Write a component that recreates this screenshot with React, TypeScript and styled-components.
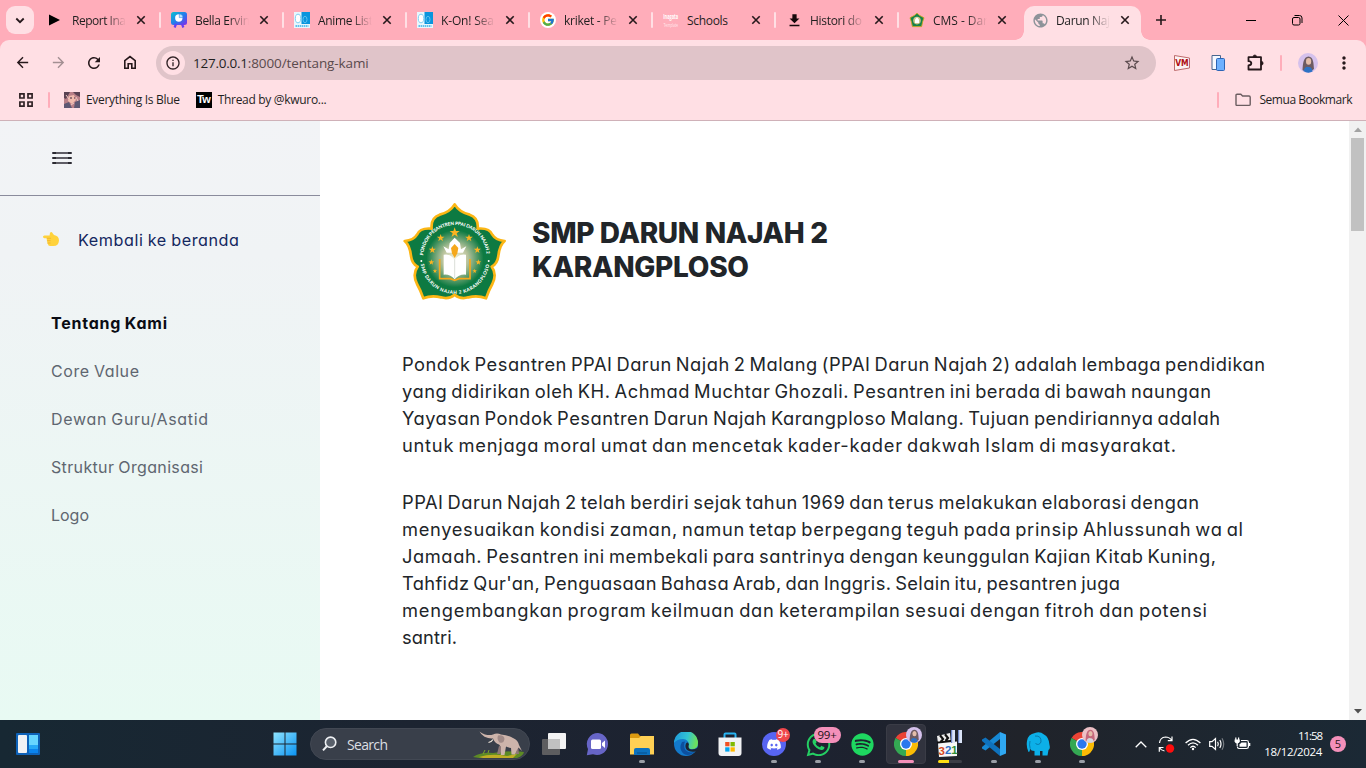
import React, { useLayoutEffect, useRef, useState } from "react";
import styled, { createGlobalStyle, css } from "styled-components";
import {
  MdArrowBack,
  MdArrowForward,
  MdRefresh,
  MdStarBorder,
  MdMoreVert,
  MdInfoOutline,
  MdFileDownload,
  MdPublic,
} from "react-icons/md";
import { FcGoogle } from "react-icons/fc";
import { FaWhatsapp, FaSpotify, FaDiscord } from "react-icons/fa";

const uiFont = `"Open Sans", "Noto Sans", sans-serif`;
const pageFont = `Inter, "Open Sans", sans-serif`;

const GlobalStyle = createGlobalStyle`
  * { box-sizing: border-box; }
  html, body { margin: 0; padding: 0; overflow: hidden; }
  body { font-family: ${uiFont}; font-size: 12px; color: #1f1f1f; }
  svg { display: block; flex: none; }
  p, h1 { margin: 0; }
`;

/* Text tracked so that it spans a given width */
const FitText = styled.span`
  display: block;
  white-space: pre;
  width: max-content;
`;

function Fit({ w, children }: { w: number; children: string }) {
  const ref = useRef<HTMLSpanElement>(null);
  const [spacing, setSpacing] = useState(0);
  useLayoutEffect(() => {
    const el = ref.current;
    if (!el) return;
    el.style.letterSpacing = "0px";
    const natural = el.getBoundingClientRect().width;
    setSpacing((w - natural) / (children.length - 1));
  }, [w, children]);
  return (
    <FitText ref={ref} style={{ letterSpacing: `${spacing}px` }}>
      {children}
    </FitText>
  );
}

const Screen = styled.div`
  width: 1366px;
  height: 768px;
  display: flex;
  flex-direction: column;
  overflow: hidden;
  background: #fff;
`;

/* ---------- Browser tab strip ---------- */
const TabStrip = styled.div`
  height: 40px;
  flex: none;
  display: flex;
  align-items: flex-start;
  background: #ffadba;
`;
const TabSearch = styled.div`
  width: 28px;
  height: 28px;
  margin: 6px 6px 0;
  border-radius: 9px;
  background: #ffdfe4;
  display: grid;
  place-items: center;
`;
const Tabs = styled.div`
  display: flex;
  gap: 6px;
`;
const flare = css`
  content: "";
  position: absolute;
  bottom: 0;
  width: 9px;
  height: 9px;
`;
const TabBox = styled.div<{ $active?: boolean; $divided?: boolean }>`
  position: relative;
  width: 117px;
  height: 34px;
  margin-top: 6px;
  padding: 0 10px 6px 8px;
  display: flex;
  align-items: center;
  border-radius: 10px 10px 0 0;
  ${(p) =>
    p.$divided &&
    css`
      &::after {
        content: "";
        position: absolute;
        right: -4px;
        top: 6px;
        width: 2px;
        height: 16px;
        border-radius: 1px;
        background: #ffdfe4;
      }
    `}
  ${(p) =>
    p.$active &&
    css`
      background: #ffdfe4;
      &::before {
        ${flare}
        left: -9px;
        background: radial-gradient(circle at 0 0, transparent 8.5px, #ffdfe4 9px);
      }
      &::after {
        ${flare}
        right: -9px;
        background: radial-gradient(circle at 100% 0, transparent 8.5px, #ffdfe4 9px);
      }
    `}
`;
const Favicon = styled.div`
  width: 16px;
  height: 16px;
  margin-right: 8px;
  display: grid;
  place-items: center;
`;
const TabTitle = styled.div<{ $fade: boolean }>`
  width: 56px;
  overflow: hidden;
  line-height: 18px;
  margin-top: 1px;
  margin-right: 8px;
  ${(p) =>
    p.$fade && css`mask-image: linear-gradient(90deg, #000 34px, transparent 54px);`}
`;
const NewTab = styled.div`
  width: 20px;
  height: 20px;
  margin: 10px 0 0 10px;
  display: grid;
  place-items: center;
`;
const WindowButtons = styled.div`
  margin-left: auto;
  height: 40px;
  display: flex;
`;
const WindowButton = styled.div`
  width: 46px;
  height: 40px;
  display: grid;
  place-items: center;
`;

/* ---------- Toolbar ---------- */
const ToolbarBack = styled.div`
  background: #ffadba;
  flex: none;
`;
const Toolbar = styled.div`
  height: 45px;
  padding: 0 12px;
  display: flex;
  align-items: center;
  background: #ffdfe4;
  border-radius: 9px 9px 0 0;
`;
const NavButton = styled.div<{ $dim?: boolean }>`
  width: 20px;
  height: 20px;
  margin-right: 16px;
  display: grid;
  place-items: center;
  color: ${(p) => (p.$dim ? "#a38f92" : "#26181b")};
`;
const AddressBar = styled.div`
  width: 1000px;
  height: 34px;
  padding: 0 15px 0 5px;
  border-radius: 17px;
  background: #e0c4c9;
  display: flex;
  align-items: center;
  color: #5a4a4d;
`;
const InfoChip = styled.div`
  width: 24px;
  height: 24px;
  margin-right: 8px;
  border-radius: 50%;
  background: #ffdfe4;
  display: grid;
  place-items: center;
  color: #302225;
`;
const Url = styled.div`
  display: flex;
  flex: 1;
  font-size: 13.5px;
  line-height: 20px;
`;
const Host = styled.span`
  color: #1f1f1f;
`;
const Extensions = styled.div`
  display: flex;
  align-items: center;
  padding-left: 16px;
`;
const ExtensionSlot = styled.div<{ $gap: number }>`
  width: 20px;
  height: 20px;
  margin-right: ${(p) => p.$gap}px;
  display: grid;
  place-items: center;
  color: #26181b;
`;
const PinkRule = styled.div<{ $mr: number; $ml?: number }>`
  width: 2px;
  height: 16px;
  border-radius: 1px;
  background: #ffadba;
  margin-right: ${(p) => p.$mr}px;
  margin-left: ${(p) => p.$ml ?? 0}px;
`;

/* ---------- Bookmarks bar ---------- */
const Bookmarks = styled.div`
  height: 36px;
  flex: none;
  display: flex;
  align-items: center;
  padding: 0 14px 6px 18px;
  background: #ffdfe4;
  border-bottom: 1px solid #cfb1b8;
`;
const Bookmark = styled.div<{ $gap?: number }>`
  display: flex;
  align-items: center;
  gap: ${(p) => p.$gap ?? 6}px;
  line-height: 18px;
  margin-right: 16px;
  &:last-child {
    margin-right: 0;
  }
`;
const Spacer = styled.div`
  flex: 1;
`;
const TwIcon = styled.div`
  width: 16px;
  height: 16px;
  background: #000;
  color: #fff;
  font: 700 11px/15px "Liberation Sans", sans-serif;
  letter-spacing: -0.5px;
  text-align: center;
`;

/* ---------- Web page ---------- */
const Viewport = styled.div`
  flex: 1;
  min-height: 0;
  display: flex;
  font-family: ${pageFont};
  font-feature-settings: "cv11";
`;
const Sidebar = styled.aside`
  width: 320px;
  flex: none;
  background: linear-gradient(180deg, #f2f3f6 0%, #f0f3f5 22%, #e8faf3 100%);
`;
const SidebarHead = styled.div`
  height: 75px;
  padding: 31px 0 0 52px;
  border-bottom: 1px solid #8a8b9c;
`;
const BackLink = styled.a`
  display: flex;
  align-items: center;
  padding: 31px 0 0 42px;
  height: 57px;
  gap: 18px;
  font-size: 16.2px;
  word-spacing: -0.8px;
  line-height: 24px;
  color: #14275f;
`;
const Menu = styled.nav`
  display: flex;
  flex-direction: column;
  gap: 24px;
  padding: 58px 0 0 51px;
`;
const MenuItem = styled.a<{ $active?: boolean }>`
  font-size: 16px;
  word-spacing: -0.8px;
  line-height: 24px;
  color: ${(p) => (p.$active ? "#0a0c14" : "#5f6670")};
  font-weight: ${(p) => (p.$active ? 700 : 400)};
`;
const Content = styled.main`
  flex: 1;
  padding: 80px 0 0 82px;
  color: #212529;
`;
const Brand = styled.header`
  display: flex;
  height: 102px;
  gap: 25px;
`;
const BrandName = styled.h1`
  padding-top: 15px;
  font-size: 28px;
  line-height: 34px;
  font-weight: 800;
`;
const Paragraph = styled.p<{ $top: number }>`
  margin-top: ${(p) => p.$top}px;
  font-size: 18.3px;
  word-spacing: -1.6px;
  line-height: 27px;
`;
const Scrollbar = styled.div`
  width: 17px;
  flex: none;
  background: #f1f1f1;
  display: flex;
  flex-direction: column;
  align-items: center;
`;
const ScrollArrow = styled.div<{ $down?: boolean }>`
  height: 17px;
  display: grid;
  place-items: center;
  margin-top: ${(p) => (p.$down ? "auto" : "0")};
`;
const ScrollThumb = styled.div`
  width: 13px;
  height: 93px;
  background: #c1c1c1;
`;

/* ---------- Taskbar ---------- */
const Taskbar = styled.div`
  height: 48px;
  flex: none;
  display: flex;
  align-items: center;
  background: linear-gradient(90deg, #172833 0%, #1c2431 30%, #1d2230 60%, #20232a 75%, #1b2935 100%);
  color: #fff;
`;
const Widgets = styled.div`
  padding-left: 16px;
  width: 263px;
`;
const TaskSlot = styled.div<{ $active?: boolean }>`
  position: relative;
  width: 44px;
  height: 48px;
  display: grid;
  place-items: center;
  ${(p) =>
    p.$active &&
    css`
      &::before {
        content: "";
        position: absolute;
        inset: 4px 2px;
        border-radius: 4px;
        background: #31333e;
        border: 1px solid #3a3c46;
      }
    `}
`;
const Glyph = styled.div`
  position: relative;
  display: grid;
  place-items: center;
`;
const Indicator = styled.div<{ $w: number; $c: string }>`
  position: absolute;
  bottom: 5px;
  left: ${(p) => (44 - p.$w) / 2}px;
  width: ${(p) => p.$w}px;
  height: 3px;
  border-radius: 2px;
  background: ${(p) => p.$c};
`;
const MediaProgress = styled.div`
  position: absolute;
  bottom: 5px;
  left: 10px;
  width: 24px;
  height: 3px;
  border-radius: 2px;
  background: linear-gradient(90deg, #ffdf12 11px, #3c3e46 11px);
`;
const SearchBox = styled.div`
  width: 220px;
  height: 32px;
  margin: 0 2px 0 3px;
  padding: 0 4px 0 11px;
  border-radius: 16px;
  background: #393f4a;
  border: 1px solid #424853;
  display: flex;
  align-items: center;
  gap: 10px;
  font-size: 14px;
  color: #dcdee2;
`;
const CountBadge = styled.div<{ $pink?: boolean }>`
  position: absolute;
  top: -4px;
  right: ${(p) => (p.$pink ? "-9px" : "-4px")};
  width: ${(p) => (p.$pink ? 27 : 14)}px;
  height: ${(p) => (p.$pink ? 16 : 14)}px;
  border-radius: 8px;
  background: ${(p) => (p.$pink ? "#f490ba" : "#f0474c")};
  color: ${(p) => (p.$pink ? "#1a1016" : "#fff")};
  font-size: ${(p) => (p.$pink ? 11.5 : 10)}px;
  line-height: ${(p) => (p.$pink ? 16 : 13)}px;
  text-align: center;
  letter-spacing: -0.3px;
`;
const Avatar = styled.div`
  position: absolute;
  top: -5px;
  right: -4px;
`;
const Tray = styled.div`
  margin-left: auto;
  display: flex;
  align-items: center;
  padding-right: 20px;
`;
const TrayIcon = styled.div<{ $w: number }>`
  width: ${(p) => p.$w}px;
  display: grid;
  place-items: center;
`;
const Clock = styled.div`
  width: 65px;
  margin-right: 8px;
  display: flex;
  flex-direction: column;
  align-items: flex-end;
  font-size: 11.5px;
  line-height: 16px;
`;
const Notice = styled.div`
  width: 16px;
  height: 16px;
  border-radius: 50%;
  background: #f490ba;
  color: #2a1620;
  font-size: 11px;
  line-height: 16px;
  text-align: center;
`;

/* ---------- Drawings ---------- */
const star = (cx: number, cy: number, r: number) => {
  const pts: string[] = [];
  for (let i = 0; i < 10; i++) {
    const a = -Math.PI / 2 + (i * Math.PI) / 5;
    const k = i % 2 ? r * 0.4 : r;
    pts.push(`${(cx + k * Math.cos(a)).toFixed(1)},${(cy + k * Math.sin(a)).toFixed(1)}`);
  }
  return pts.join(" ");
};

const crestPath =
  "M193 41C203 58 222 68 238 72C256 78 264 94 262 114C282 112 300 118 306 132C314 146 330 150 343 151C329 162 326 178 324 196C322 212 316 222 304 228C316 244 314 264 306 280C298 294 292 308 287 323C270 316 250 316 234 320C216 325 202 320 193 312C184 320 170 325 152 320C136 316 116 316 99 323C94 308 88 294 80 280C72 264 70 244 82 228C70 222 64 212 62 196C60 178 57 162 43 151C56 150 72 146 80 132C86 118 104 112 124 114C122 94 130 78 148 72C164 68 183 58 193 41Z";

const Crest = () => (
  <svg width="105" height="101" viewBox="35 31 315 303">
    <defs>
      <radialGradient id="glow">
        <stop offset="0" stopColor="#f4f2dc" />
        <stop offset="0.45" stopColor="#b9c39c" />
        <stop offset="1" stopColor="#0d7a42" />
      </radialGradient>
      <path id="arcTop" d="M99 198A95 95 0 0 1 289 198" />
      <path id="arcBottom" d="M90 206A104 104 0 0 0 298 206" />
    </defs>
    <path d={crestPath} fill="#0d7a42" stroke="#fcb614" strokeWidth="8" strokeLinejoin="round" />
    <circle cx="194" cy="204" r="86" fill="url(#glow)" />
    <g fill="#fcb421">
      <polygon points={star(193, 126, 16)} />
      <polygon points={star(151, 142, 12)} />
      <polygon points={star(236, 142, 12)} />
      <polygon points={star(126, 178, 11)} />
      <polygon points={star(261, 178, 11)} />
      <polygon points={star(123, 215, 9)} />
      <polygon points={star(264, 215, 9)} />
      <polygon points={star(134, 241, 7)} />
      <polygon points={star(253, 241, 7)} />
    </g>
    <path d="M148 205V264H180L193 269L206 264H239V205" fill="none" stroke="#f5a81c" strokeWidth="5" />
    <path d="M160 192Q182 188 193 208Q204 188 227 192V252Q206 250 193 266Q180 250 160 252Z" fill="#fff" />
    <path d="M159 167L175 176L178 157L193 141L209 157L212 176L228 167L218 186H169Z" fill="#fff" />
    <path d="M193 160L204 172L201 188L193 202L185 188L182 172Z" fill="#f5a81c" />
    <path d="M193 206V262" stroke="#c9cfc6" strokeWidth="2" />
    <g fill="#fff" fontFamily="Lato, sans-serif" fontWeight="900" fontSize="14">
      <text>
        <textPath href="#arcTop" startOffset="4" textLength="286">PONDOK PESANTREN PPAI DARUN NAJAH 2</textPath>
      </text>
      <text>
        <textPath href="#arcBottom" startOffset="14" textLength="296">SMP DARUN NAJAH 2 KARANGPLOSO</textPath>
      </text>
    </g>
    <circle cx="93" cy="211" r="3" fill="#fff" />
    <circle cx="295" cy="211" r="3" fill="#fff" />
  </svg>
);

const MiniCrest = () => (
  <svg width="16" height="16" viewBox="0 0 16 16">
    <path d="M8 1.2L10.6 3.4L15 5.8L13.7 9.6L12.6 14.6H3.4L2.3 9.6L1 5.8L5.4 3.4Z" fill="#16824a" stroke="#c5a51f" strokeWidth="0.9" strokeLinejoin="round" />
    <circle cx="8" cy="8.6" r="3.8" fill="#c9c68a" />
    <path d="M6 7.5L8 5.3L10 7.5V11H6Z" fill="#fff" />
  </svg>
);

const CloseX = () => (
  <svg width="10" height="10" viewBox="0 0 10 10">
    <path d="M1.3 1.3L8.7 8.7M8.7 1.3L1.3 8.7" stroke="#26181b" strokeWidth="1.6" />
  </svg>
);

const CatalogIcon = () => (
  <svg width="16" height="16" viewBox="0 0 16 16">
    <rect width="16" height="16" fill="#e8f7fd" />
    <rect x="7.5" width="8.5" height="12" fill="#0a95dd" />
    <ellipse cx="4" cy="6.5" rx="2.7" ry="4.3" fill="#fff" stroke="#7fd0f2" />
    <ellipse cx="11" cy="7.5" rx="2" ry="3.2" fill="none" stroke="#5cc0ee" />
    <path d="M1.5 14H14.5" stroke="#35b0e8" strokeWidth="1.6" strokeDasharray="1.5 .6" />
  </svg>
);

const PresentIcon = () => (
  <svg width="16" height="16" viewBox="0 0 16 16">
    <defs>
      <linearGradient id="present" x1="0" y1="0" x2="1" y2="1">
        <stop offset="0" stopColor="#08c4cf" />
        <stop offset="0.55" stopColor="#2876ee" />
        <stop offset="1" stopColor="#8a28e6" />
      </linearGradient>
    </defs>
    <rect width="16" height="13" rx="2.5" fill="url(#present)" />
    <path d="M5 12L3.6 15.5M11 12L12.4 15.5" stroke="#6a3cf0" strokeWidth="2.2" />
    <circle cx="7.8" cy="6" r="3.7" fill="#fff" />
    <path d="M8.3 5.6V1.9A3.7 3.7 0 0 1 12 5.6Z" fill="#bfe3ff" stroke="#2c86e8" strokeWidth=".6" />
  </svg>
);

const InagataIcon = () => (
  <svg width="16" height="16" viewBox="0 0 16 16" fill="#fff">
    <g transform="scale(.55 1)" fontFamily="Open Sans, sans-serif">
      <text x="0.5" y="7.5" fontSize="7" fontWeight="700" textLength="27" lengthAdjust="spacingAndGlyphs">Inagata</text>
      <text x="1" y="14.8" fontSize="5.5" opacity="0.7" textLength="26" lengthAdjust="spacingAndGlyphs">Template</text>
    </g>
  </svg>
);

const Person = ({ size, tone, bg, top }: { size: number; tone: string; bg: string; top: string }) => (
  <svg width={size} height={size} viewBox="0 0 20 20">
    <circle cx="10" cy="10" r="10" fill={bg} />
    <path d="M4.5 17C5 10 5.5 4 10.5 3.5C15.5 4 15.5 10 16 16L12 19H8Z" fill={tone} />
    <ellipse cx="10.6" cy="8.4" rx="2.6" ry="3.3" fill="#e3bda9" />
    <path d="M5.5 18Q7 13 10.5 14Q14 13.5 14.5 18.5Q10 21 5.5 18Z" fill={top} />
  </svg>
);

const Chrome = ({ children }: { children?: React.ReactNode }) => (
  <Glyph>
    <svg width="24" height="24" viewBox="0 0 24 24">
      <path d="M12 12L1.6 6A12 12 0 0 1 22.4 6Z" fill="#ea4335" />
      <path d="M12 12L22.4 6A12 12 0 0 1 12 24Z" fill="#fbbc05" />
      <path d="M12 12L12 24A12 12 0 0 1 1.6 6Z" fill="#34a853" />
      <path d="M12 6.3H22.5L21.5 4.8L12 3Z" fill="#ea4335" />
      <path d="M17 14.8L11.8 24H14L22 16Z" fill="#fbbc05" />
      <path d="M7 14.8L1.6 6L1 9L4 16Z" fill="#34a853" />
      <circle cx="12" cy="12" r="6" fill="#fff" />
      <circle cx="12" cy="12" r="4.7" fill="#2a78ee" />
    </svg>
    {children}
  </Glyph>
);

const HandIcon = () => (
  <svg width="18" height="18" viewBox="0 0 18 18">
    <path d="M2.4 4.4H7.6L8 1.8Q9.8 0 10.8 2.6L12 4Q17 5 17 9.4Q16.6 14.9 11.4 14.9H8Q6 14.9 6 13.2Q4.8 12.4 5.4 11Q4.4 10.2 5 9Q4.2 8 4.8 7.3H2.4Q1 7 1 5.8Q1 4.6 2.4 4.4Z" fill="#ffd23c" />
    <path d="M4.8 7.3H9M5.2 9.6H8.6M5.6 12H8.6" stroke="#eeaa2c" strokeWidth="0.7" />
  </svg>
);

const Elephant = () => (
  <svg width="52" height="28" viewBox="0 0 52 28">
    <path d="M0 27Q8 22 20 23Q42 20 51 22Q50 26 44 28H6Z" fill="#5d8a25" />
    <path d="M6 27Q18 23 34 26L44 24L40 28H10Z" fill="#c0ae25" />
    <path d="M10 24L12 20M15 23L16 20" stroke="#7ca62a" />
    <path d="M39 16L43 24H46L45 15ZM26 16L24 24H27L30 17Z" fill="#8d7777" />
    <path d="M6.5 1.5Q9 3.5 12 4.5Q17 5.5 20 4.5Q24 2.5 28 4.5Q35 5 40 8Q45 10 46 15L49 21L45.5 17.5Q43 21 42 24.5H38.5L38 18Q35 17.5 33 16.5L31.5 25H27.8L28 17L26 14.5Q22 13.5 20 8.5Q16 9 11.5 6.8Q8 4.5 6.5 1.5Z" fill="#cdb4ab" />
    <path d="M25 5.5Q31 4.5 31.5 9Q30.5 14 26.5 12.5Q23.5 9 25 5.5Z" fill="#a08a87" />
    <path d="M20 9.5Q18.5 12 15.5 12.5" stroke="#f2e8dc" strokeWidth="1.2" fill="none" />
  </svg>
);

const tabs = [
  { title: "Report Ina", w: 54, icon: <svg width="16" height="16"><path d="M1 2.5L12 8L1 13.5Z" fill="#000" /></svg> },
  { title: "Bella Ervin", w: 55, icon: <PresentIcon /> },
  { title: "Anime List", w: 55, icon: <CatalogIcon /> },
  { title: "K-On! Sea", w: 53, icon: <CatalogIcon /> },
  { title: "kriket - Pe", w: 53, icon: <svg width="16" height="16" viewBox="0 0 16 16"><circle cx="8" cy="8" r="8" fill="#fff" /><FcGoogle x="1" y="1" size={14} /></svg> },
  { title: "Schools", w: 41, icon: <InagataIcon /> },
  { title: "Histori do", w: 52, icon: <MdFileDownload size={17} color="#16090b" /> },
  { title: "CMS - Dar", w: 55, icon: <MiniCrest /> },
  { title: "Darun Naj", w: 54, icon: <MdPublic size={17} color="#8d9399" /> },
];

const about = [
  ["Pondok Pesantren PPAI Darun Najah 2 Malang (PPAI Darun Najah 2) adalah lembaga pendidikan", 863],
  ["yang didirikan oleh KH. Achmad Muchtar Ghozali. Pesantren ini berada di bawah naungan", 809],
  ["Yayasan Pondok Pesantren Darun Najah Karangploso Malang. Tujuan pendiriannya adalah", 818],
  ["untuk menjaga moral umat dan mencetak kader-kader dakwah Islam di masyarakat.", 774],
] as const;
const history = [
  ["PPAI Darun Najah 2 telah berdiri sejak tahun 1969 dan terus melakukan elaborasi dengan", 797],
  ["menyesuaikan kondisi zaman, namun tetap berpegang teguh pada prinsip Ahlussunah wa al", 841],
  ["Jamaah. Pesantren ini membekali para santrinya dengan keunggulan Kajian Kitab Kuning,", 814],
  ["Tahfidz Qur'an, Penguasaan Bahasa Arab, dan Inggris. Selain itu, pesantren juga", 718],
  ["mengembangkan program keilmuan dan keterampilan sesuai dengan fitroh dan potensi", 805],
  ["santri.", 55],
] as const;

export default function App() {
  return (
    <Screen>
      <GlobalStyle />
      <TabStrip>
        <TabSearch>
          <svg width="10" height="7" viewBox="0 0 10 7"><path d="M1.3 1.5L5 5.2L8.7 1.5" stroke="#26181b" strokeWidth="1.8" fill="none" /></svg>
        </TabSearch>
        <Tabs>
          {tabs.map((t, i) => (
            <TabBox key={t.title} $active={i === 8} $divided={i < 7}>
              <Favicon>{t.icon}</Favicon>
              <TabTitle $fade={t.title !== "Schools"}><Fit w={t.w}>{t.title}</Fit></TabTitle>
              <CloseX />
            </TabBox>
          ))}
        </Tabs>
        <NewTab>
          <svg width="12" height="12"><path d="M6 1V11M1 6H11" stroke="#26181b" strokeWidth="1.6" /></svg>
        </NewTab>
        <WindowButtons>
          <WindowButton><svg width="10" height="10"><path d="M0 5.5H10" stroke="#000" /></svg></WindowButton>
          <WindowButton>
            <svg width="11" height="11" fill="none" stroke="#000">
              <rect x="0.5" y="2.5" width="7.5" height="7.5" rx="1.5" />
              <path d="M2.5 .5H7.5Q10 .5 10 3V8" />
            </svg>
          </WindowButton>
          <WindowButton><svg width="11" height="11"><path d="M.5 .5L10.5 10.5M10.5 .5L.5 10.5" stroke="#000" /></svg></WindowButton>
        </WindowButtons>
      </TabStrip>

      <ToolbarBack>
        <Toolbar>
          <NavButton><MdArrowBack size={17} /></NavButton>
          <NavButton $dim><MdArrowForward size={17} /></NavButton>
          <NavButton><MdRefresh size={18} /></NavButton>
          <NavButton>
            <svg width="14" height="15" viewBox="0 0 14 15" fill="none" stroke="#26181b" strokeWidth="1.6">
              <path d="M1.8 5.6L7 1.6L12.2 5.6V13.2H8.8V8.8H5.2V13.2H1.8Z" />
            </svg>
          </NavButton>
          <AddressBar>
            <InfoChip><MdInfoOutline size={16} /></InfoChip>
            <Url><Host><Fit w={55}>127.0.0.1</Fit></Host><Fit w={121}>:8000/tentang-kami</Fit></Url>
            <MdStarBorder size={18} />
          </AddressBar>
          <Extensions>
            <ExtensionSlot $gap={16}>
              <svg width="16" height="16" viewBox="0 0 16 16">
                <path d="M.5 .5L15.5 3V13L.5 15.5Z" fill="#fbf3f3" stroke="#bd6b6b" />
                <text x="1.2" y="11" fontSize="8" fontWeight="900" fontFamily="DejaVu Sans" fill="#b00d12" textLength="13.5" lengthAdjust="spacingAndGlyphs">VM</text>
              </svg>
            </ExtensionSlot>
            <ExtensionSlot $gap={17}>
              <svg width="14" height="16" viewBox="0 0 14 16">
                <path d="M1 .5H9.5V14.5H1Z" fill="#f5f8ff" stroke="#47658e" />
                <rect x="5.5" y="3.5" width="8" height="12" rx="1" fill="#6db0ff" stroke="#2c64b5" />
              </svg>
            </ExtensionSlot>
            <ExtensionSlot $gap={15}>
              <svg width="17" height="17" viewBox="0 0 17 17" fill="none" stroke="#26181b" strokeWidth="1.8">
                <path d="M1.5 3.2H14V15.5H1.5V11.5Q4.3 11.2 4.3 9.3Q4.3 7.4 1.5 7.2Z" strokeLinejoin="round" />
                <path d="M6 3Q6 .9 7.8 .9Q9.6 .9 9.6 3ZM14 7.2Q16.2 7.2 16.2 9.2Q16.2 11.2 14 11.2Z" fill="#26181b" strokeWidth=".6" />
              </svg>
            </ExtensionSlot>
            <PinkRule $mr={16} />
            <ExtensionSlot $gap={16}><Person size={20} tone="#6d5b62" bg="#d5c1ec" top="#2d72c4" /></ExtensionSlot>
            <ExtensionSlot $gap={0}><MdMoreVert size={20} /></ExtensionSlot>
          </Extensions>
        </Toolbar>
      </ToolbarBack>

      <Bookmarks>
        <svg width="16" height="16" viewBox="0 0 16 16" fill="none" stroke="#302225" strokeWidth="1.7">
          <path d="M1.9 1.9H6V6H1.9ZM10 1.9H14.1V6H10ZM1.9 10H6V14.1H1.9ZM10 10H14.1V14.1H10Z" />
        </svg>
        <PinkRule $ml={14} $mr={14} />
        <Bookmark>
          <svg width="16" height="16" viewBox="0 0 16 16">
            <rect width="16" height="16" fill="#b98088" />
            <path d="M0 0H6L2 7L0 6ZM9 0H16V5L12 3Z" fill="#5a4252" />
            <path d="M5 4L10 3L12 8L8 12L4 9Z" fill="#f2bcae" />
            <path d="M0 12L5 10L8 16H0ZM11 10L16 8V16H10Z" fill="#5e5873" />
            <path d="M2 3L5 7M12 5L14 9M7 13L10 11" stroke="#efc9c2" />
            <path d="M6 6H8M10 6H11" stroke="#36263a" />
          </svg>
          <Fit w={94}>Everything Is Blue</Fit>
        </Bookmark>
        <Bookmark>
          <TwIcon>Tw</TwIcon>
          <Fit w={109}>Thread by @kwuro...</Fit>
        </Bookmark>
        <Spacer />
        <PinkRule $mr={16} />
        <Bookmark $gap={8}>
          <svg width="16" height="14" viewBox="0 0 16 14" fill="none" stroke="#6b5d60" strokeWidth="1.4">
            <path d="M1 2.2Q1 1.2 2 1.2H5.8L7.6 3H14Q15.2 3 15.2 4.2V11.4Q15.2 12.4 14 12.4H2Q1 12.4 1 11.4Z" />
          </svg>
          <Fit w={93}>Semua Bookmark</Fit>
        </Bookmark>
      </Bookmarks>

      <Viewport>
        <Sidebar>
          <SidebarHead>
            <svg width="20" height="13" viewBox="0 0 20 13">
              <path d="M0 1H20M0 6H20M0 11H20" stroke="#5f5d66" strokeWidth="2" />
              <path d="M1 1H4M16 1H19M1 6H4M16 6H19M1 11H4M16 11H19" stroke="#2b2a31" strokeWidth="2" />
            </svg>
          </SidebarHead>
          <BackLink><HandIcon /><Fit w={161}>Kembali ke beranda</Fit></BackLink>
          <Menu>
            <MenuItem $active><Fit w={116}>Tentang Kami</Fit></MenuItem>
            <MenuItem><Fit w={88}>Core Value</Fit></MenuItem>
            <MenuItem><Fit w={157}>Dewan Guru/Asatid</Fit></MenuItem>
            <MenuItem><Fit w={152}>Struktur Organisasi</Fit></MenuItem>
            <MenuItem><Fit w={38}>Logo</Fit></MenuItem>
          </Menu>
        </Sidebar>
        <Content>
          <Brand>
            <Crest />
            <BrandName><Fit w={296}>SMP DARUN NAJAH 2</Fit><Fit w={217}>KARANGPLOSO</Fit></BrandName>
          </Brand>
          <Paragraph $top={48}>{about.map(([s, w]) => <Fit key={s} w={w}>{s}</Fit>)}</Paragraph>
          <Paragraph $top={30}>{history.map(([s, w]) => <Fit key={s} w={w}>{s}</Fit>)}</Paragraph>
        </Content>
        <Scrollbar>
          <ScrollArrow><svg width="8" height="5"><path d="M0 5L4 .5L8 5Z" fill="#a3a3a3" /></svg></ScrollArrow>
          <ScrollThumb />
          <ScrollArrow $down><svg width="8" height="5"><path d="M0 0L4 4.5L8 0Z" fill="#505050" /></svg></ScrollArrow>
        </Scrollbar>
      </Viewport>

      <Taskbar>
        <Widgets>
          <svg width="24" height="22" viewBox="0 0 24 22">
            <rect width="24" height="22" rx="1" fill="#0e62b8" />
            <rect x="2" y="2" width="9" height="18" rx="1" fill="#f1f2f4" />
            <rect x="13" y="2" width="9" height="10" fill="#67d6ff" />
            <rect x="13" y="12" width="9" height="4" fill="#26a9f7" />
            <rect x="13" y="16" width="9" height="4" fill="#0a84ee" />
          </svg>
        </Widgets>
        <TaskSlot>
          <svg width="24" height="24" viewBox="0 0 24 24">
            <defs>
              <linearGradient id="win" x1="0" y1="0" x2="1" y2="1">
                <stop offset="0" stopColor="#8fe4ff" />
                <stop offset="1" stopColor="#0a93f2" />
              </linearGradient>
            </defs>
            <path d="M.5 .5H11.5V11.5H.5ZM12.5 .5H23.5V11.5H12.5ZM.5 12.5H11.5V23.5H.5ZM12.5 12.5H23.5V23.5H12.5Z" fill="url(#win)" />
          </svg>
        </TaskSlot>
        <SearchBox>
          <svg width="15" height="16" viewBox="0 0 15 16" fill="none" stroke="#eef0f3" strokeWidth="1.6">
            <circle cx="8.6" cy="6.3" r="5.2" fill="#59606b" />
            <path d="M4.8 10.3L1 14.4" strokeWidth="2" />
          </svg>
          <Fit w={41}>Search</Fit>
          <Spacer />
          <Elephant />
        </SearchBox>
        <TaskSlot>
          <svg width="24" height="22" viewBox="0 0 24 22">
            <rect x="6" width="18" height="16" rx="1" fill="#f3f3f3" />
            <rect y="6" width="18" height="16" rx="1" fill="#5d5d5f" />
            <rect x="6" y="6" width="12" height="10" fill="#c1c1c1" />
          </svg>
        </TaskSlot>
        <TaskSlot>
          <svg width="24" height="24" viewBox="0 0 24 24">
            <path d="M12 1A11 11 0 1 1 7 22.2L.8 23.2L2 17A11 11 0 0 1 12 1Z" fill="#6765c6" />
            <rect x="5" y="7.5" width="10" height="9.5" rx="1.5" fill="#fff" />
            <path d="M16 11L19 8.5V16L16 13.5Z" fill="#fff" />
          </svg>
        </TaskSlot>
        <TaskSlot>
          <svg width="24" height="22" viewBox="0 0 24 22">
            <path d="M0 2Q0 .5 1.5 .5H8L10 3H24V8H0Z" fill="#dc9a10" />
            <path d="M0 5H9L11 3H24V21.5H0Z" fill="#ffd054" />
            <path d="M4 22V17Q4 15 6 15H18Q20 15 20 17V22Z" fill="#0c71be" />
            <path d="M7 20H17" stroke="#074f8a" />
          </svg>
          <Indicator $w={6} $c="#9a9ea6" />
        </TaskSlot>
        <TaskSlot>
          <svg width="24" height="24" viewBox="0 0 24 24">
            <defs>
              <linearGradient id="edge" x1="0" y1="0" x2="1" y2="0.2">
                <stop offset="0" stopColor="#1c96dd" />
                <stop offset="0.6" stopColor="#32c4d3" />
                <stop offset="1" stopColor="#6be05f" />
              </linearGradient>
            </defs>
            <circle cx="12" cy="12" r="12" fill="#1379cb" />
            <path d="M0 11A12 12 0 0 1 24 11Q24 17 18 17Q14 17 14.5 14Q16 8 9 7Q3 7 0 11Z" fill="url(#edge)" />
            <path d="M8 10Q4 17 10 22Q15 25 21 19.5Q15 22 11.5 18Q9 14 11 9.5Z" fill="#0d4f9e" />
            <path d="M14.5 14Q14 17 18 17.6Q21 17.6 24 15.5V18L21.5 19.5Q16 20.5 13 18Q10.5 15 12 11.5Q13 10 14 10.5Q15.6 12 14.5 14Z" fill="#1c2431" />
          </svg>
        </TaskSlot>
        <TaskSlot>
          <svg width="24" height="24" viewBox="0 0 24 24">
            <path d="M6.5 6V2.6Q6.5 1.5 7.5 1.5H16.5Q17.5 1.5 17.5 2.6V6" stroke="#28b4f2" strokeWidth="2" fill="none" />
            <path d="M.5 5.5H23.5V21Q23.5 24 20.5 24H3.5Q.5 24 .5 21Z" fill="#f1f2f4" />
            <rect x="7.2" y="10" width="4.3" height="4.3" fill="#f25022" />
            <rect x="12.5" y="10" width="4.3" height="4.3" fill="#7fba00" />
            <rect x="7.2" y="15.3" width="4.3" height="4.3" fill="#00a4ef" />
            <rect x="12.5" y="15.3" width="4.3" height="4.3" fill="#ffb900" />
          </svg>
        </TaskSlot>
        <TaskSlot>
          <Glyph>
            <svg width="24" height="24" viewBox="0 0 24 24">
              <circle cx="12" cy="12" r="12" fill="#5865f2" />
              <FaDiscord x="4.5" y="5" size={15} color="#fff" />
            </svg>
            <CountBadge>9+</CountBadge>
          </Glyph>
          <Indicator $w={6} $c="#9a9ea6" />
        </TaskSlot>
        <TaskSlot>
          <Glyph><FaWhatsapp size={27} color="#24cf63" /><CountBadge $pink>99+</CountBadge></Glyph>
          <Indicator $w={6} $c="#9a9ea6" />
        </TaskSlot>
        <TaskSlot><FaSpotify size={23} color="#1ed760" /><Indicator $w={6} $c="#9a9ea6" /></TaskSlot>
        <TaskSlot $active>
          <Chrome><Avatar><Person size={16} tone="#6d5b62" bg="#d5c1ec" top="#2d72c4" /></Avatar></Chrome>
          <Indicator $w={16} $c="#f490ba" />
        </TaskSlot>
        <TaskSlot>
          <svg width="26" height="28" viewBox="0 0 26 28">
            <path d="M0 6L13 3L13.5 10L1 13Z" fill="#eee" />
            <path d="M3 5.3L6 9L3.5 12.2M8 4.2L11 8L8.5 11M0 12.5L19 10.5" stroke="#111" strokeWidth="2.2" fill="none" />
            <path d="M1 13.5L20 11.5V26L2 27Z" fill="#f7f7f7" />
            <g fontFamily="Liberation Sans" fontWeight="700" fontSize="11.5">
              <text x="1.5" y="24.5" fill="#d64a1f">3</text>
              <text x="7.9" y="24" fill="#2d70c8">2</text>
              <text x="14.3" y="23.5" fill="#2f8f34">1</text>
            </g>
            <path d="M14 0H18V13H14ZM21 0H25V13H21Z" fill="#dbe4f8" />
            <path d="M14 0H15.2V13H14ZM21 0H22.2V13H21Z" fill="#6f86c6" />
          </svg>
          <MediaProgress />
        </TaskSlot>
        <TaskSlot>
          <svg width="24" height="24" viewBox="0 0 24 24">
            <path d="M18 0L24 2.5V21.5L18 24Z" fill="#2fa8f2" />
            <path d="M18 0V7L3.5 18.5L0 16.5V15Z" fill="#1688d4" />
            <path d="M18 24V17L3.5 5.5L0 7.5V9Z" fill="#0f72bd" />
          </svg>
          <Indicator $w={6} $c="#9a9ea6" />
        </TaskSlot>
        <TaskSlot>
          <svg width="24" height="24" viewBox="0 0 24 24">
            <path d="M1 9Q2 2 9 1Q14 -1 18 2.5Q23 5 23.5 13Q24.5 17 22.5 18L21.5 23.5H16.5V19H14V23.5H8.5V19Q5 19 4 16.5Q4 20 2.5 20Q0 15 1 9Z" fill="#0cb0e8" />
            <path d="M9 4Q15.5 3.5 15 10Q13 14 9.5 11.5M4 9Q3 13 4.2 16.5" stroke="#0879ab" fill="none" />
          </svg>
          <Indicator $w={6} $c="#9a9ea6" />
        </TaskSlot>
        <TaskSlot>
          <Chrome><Avatar><Person size={16} tone="#c4677c" bg="#ecc0c6" top="#d4d6dc" /></Avatar></Chrome>
          <Indicator $w={6} $c="#9a9ea6" />
        </TaskSlot>
        <Tray>
          <TrayIcon $w={24}><svg width="12" height="7" fill="none" stroke="#fff" strokeWidth="1.3"><path d="M.7 6.2L6 1L11.3 6.2" /></svg></TrayIcon>
          <TrayIcon $w={25}>
            <svg width="18" height="18" viewBox="0 0 18 18" fill="none" stroke="#fff" strokeWidth="1.2">
              <path d="M2.5 8Q3 2.5 8.5 2Q12.5 2 14.8 5.5M15 1.5V5.7H10.8M6.5 12.5H2.3V16.7M2.5 12.8Q4 15.5 7.5 16" />
              <circle cx="13" cy="13.5" r="4.2" fill="#ff0d0d" stroke="none" />
            </svg>
          </TrayIcon>
          <TrayIcon $w={29}>
            <svg width="16" height="13" viewBox="0 0 16 13" fill="none" stroke="#fff" strokeWidth="1.3">
              <path d="M.6 5Q8 -2.4 15.4 5M3 7.3Q8 2.4 13 7.3M5.3 9.6Q8 7 10.7 9.6" />
              <circle cx="8" cy="11" r="1.2" fill="#fff" stroke="none" />
            </svg>
          </TrayIcon>
          <TrayIcon $w={20}>
            <svg width="16" height="14" viewBox="0 0 16 14" fill="none" stroke="#fff" strokeWidth="1.2">
              <path d="M.7 4.7H3L6.5 1.5V12.5L3 9.3H.7Z" />
              <path d="M8.6 4.8Q10 7 8.6 9.2M10.8 3Q13.2 7 10.8 11" />
              <path d="M13 1.2Q16.4 7 13 12.8" opacity=".4" />
            </svg>
          </TrayIcon>
          <TrayIcon $w={30}>
            <svg width="17" height="14" viewBox="0 0 17 14" fill="none" stroke="#fff" strokeWidth="1.2">
              <path d="M7 3.5H12.5Q14.4 3.5 14.4 5.2V9.8Q14.4 11.5 12.5 11.5H5Q3.5 11.5 3.3 9.5" />
              <path d="M7.5 5.5H12.5V9.7H5.5V7.5Z" fill="#fff" stroke="none" />
              <path d="M15.5 6V9" strokeWidth="1.6" />
              <path d="M1.8 .5V3M4.6 .5V3M3.2 6V9" />
              <path d="M.6 2.6H5.8V4.5Q5.3 6.5 3.2 6.5Q1.1 6.5 .6 4.5Z" fill="#fff" stroke="none" />
            </svg>
          </TrayIcon>
          <Clock><Fit w={25}>11:58</Fit><Fit w={58}>18/12/2024</Fit></Clock>
          <Notice>5</Notice>
        </Tray>
      </Taskbar>
    </Screen>
  );
}
